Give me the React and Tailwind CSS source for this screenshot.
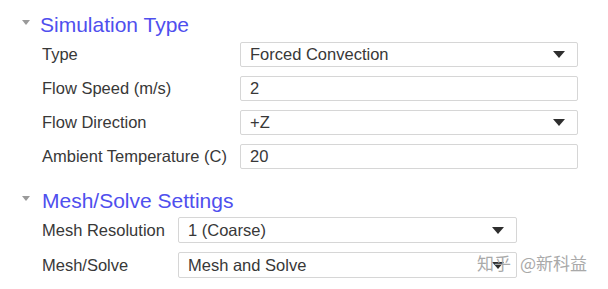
const font = { fontFamily: '"Liberation Sans", Arial, sans-serif' }

function Caret() {
  return (
    <svg className="w-[12px] h-[7px]" viewBox="0 0 12 7">
      <path d="M0 0h12L6 7z" fill="#2e2e2e" />
    </svg>
  )
}

function SectionTitle({ children, indent }) {
  return (
    <div className="flex items-center h-[30px]">
      <svg className="w-[8px] h-[5px] ml-[22px] mb-[4px]" viewBox="0 0 8 5">
        <path d="M0 0h8L4 5z" fill="#9a9a9a" />
      </svg>
      <span className={`${indent} text-[21px] leading-none text-[#4f4fee]`}>{children}</span>
    </div>
  )
}

function Field({ label, value, select, labelW, boxW, h }) {
  return (
    <div className={`flex items-center ${h}`}>
      <div className={`${labelW} pl-[42px] text-[16.5px] text-[#383838] leading-none`}>{label}</div>
      <div className={`${boxW} h-full flex items-center justify-between border border-[#d6d6d6] rounded-[2px] bg-white pl-[9px] pr-[12px] text-[16.5px] text-[#383838] leading-none`}>
        <span>{value}</span>
        {select && <Caret />}
      </div>
    </div>
  )
}

export default function App() {
  return (
    <div className="relative w-[608px] h-[289px] bg-white pt-[9px]" style={font}>
      <SectionTitle indent="ml-[10px]">Simulation Type</SectionTitle>
      <div className="flex flex-col gap-[9px] mt-[3px]">
        <Field label="Type" value="Forced Convection" select labelW="w-[240px]" boxW="w-[338px]" h="h-[25px]" />
        <Field label="Flow Speed (m/s)" value="2" labelW="w-[240px]" boxW="w-[338px]" h="h-[25px]" />
        <Field label="Flow Direction" value="+Z" select labelW="w-[240px]" boxW="w-[338px]" h="h-[25px]" />
        <Field label="Ambient Temperature (C)" value="20" labelW="w-[240px]" boxW="w-[338px]" h="h-[25px]" />
      </div>

      <div className="mt-[16px]">
        <SectionTitle indent="ml-[12px]">Mesh/Solve Settings</SectionTitle>
      </div>
      <div className="flex flex-col gap-[9px] mt-[2px]">
        <Field label="Mesh Resolution" value="1 (Coarse)" select labelW="w-[178px]" boxW="w-[339px]" h="h-[26px]" />
        <Field label="Mesh/Solve" value="Mesh and Solve" select labelW="w-[178px]" boxW="w-[339px]" h="h-[26px]" />
      </div>

      <div
        className="absolute left-[477px] top-[254px] text-[17px] leading-none text-[#a9a9a9] flex gap-[9px]"
        style={{ fontFamily: '"Noto Sans CJK SC", "Liberation Sans", sans-serif' }}
      >
        <span>知乎</span>
        <span>@新科益</span>
      </div>
    </div>
  )
}
